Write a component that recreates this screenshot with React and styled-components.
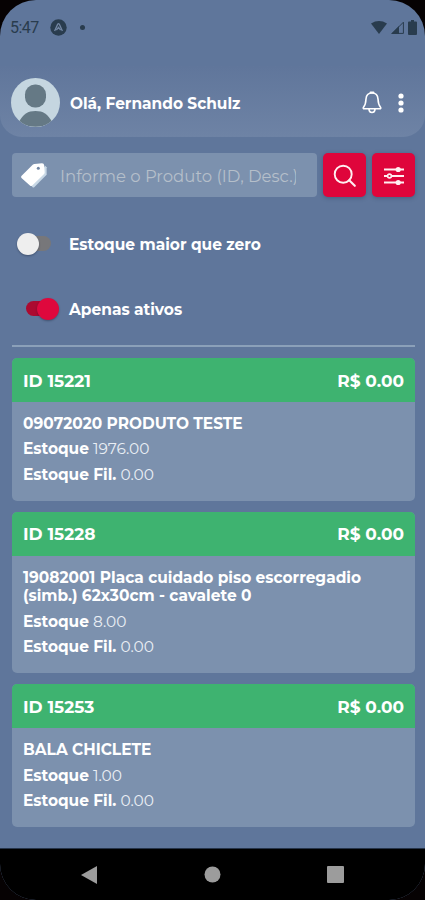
import React, { useState } from "react";
import styled, { createGlobalStyle } from "styled-components";

const GlobalStyle = createGlobalStyle`
  * {
    box-sizing: border-box;
  }

  body {
    margin: 0;
    background-color: #060203;
    font-family: Montserrat, Inter, "Open Sans", sans-serif;
  }
`;

const Screen = styled.div`
  display: flex;
  flex-direction: column;
  width: 425px;
  height: 900px;
  overflow: hidden;
  border-radius: 36px;
  background-color: #5f769b;
  color: #fff;
`;

const StatusBar = styled.div`
  display: flex;
  align-items: center;
  justify-content: space-between;
  height: 66px;
  padding: 0 8px 12px 10px;
  color: #293c4e;
`;

const StatusGroup = styled.div`
  display: flex;
  align-items: center;
  gap: ${(props) => props.$gap}px;
`;

const Clock = styled.span`
  width: 29px;
  font-family: Roboto, sans-serif;
  font-size: 16px;
  letter-spacing: -0.5px;
`;

const Dot = styled.span`
  width: 5px;
  height: 5px;
  margin-left: 2px;
  border-radius: 50%;
  background-color: #293c4e;
`;

const Header = styled.header`
  display: flex;
  align-items: center;
  height: 71px;
  padding: 2px 21px 0 11px;
  border-radius: 0 0 22px 22px;
  background: linear-gradient(#60769b, #6e83a5);
`;

const UserName = styled.h1`
  flex: 1;
  margin: 2px 0 0 10px;
  font-size: 15.4px;
  font-weight: 700;
`;

const HeaderIcons = styled.div`
  display: flex;
  align-items: center;
  gap: 16px;
`;

const Content = styled.main`
  display: flex;
  flex-direction: column;
  flex: 1;
  padding: 16px 10px 0 12px;
`;

const SearchRow = styled.div`
  display: flex;
  gap: 6px;
  height: 44px;
`;

const SearchBox = styled.label`
  display: flex;
  align-items: center;
  flex: 1;
  min-width: 0;
  padding: 0 21px 0 8px;
  border-radius: 4px;
  background-color: #7c91ae;
`;

const SearchInput = styled.input`
  flex: 1;
  min-width: 0;
  margin-left: 12px;
  padding: 1px 0 0;
  border: 0;
  outline: 0;
  background: none;
  color: #fff;
  font-family: inherit;
  font-size: 16.5px;

  &::placeholder {
    color: #b5bfca;
    opacity: 1;
  }
`;

const RedButton = styled.button`
  display: flex;
  align-items: center;
  justify-content: center;
  width: 43px;
  padding: 1px 0 0;
  border: 0;
  border-radius: 5px;
  background-color: #df053b;
  box-shadow: 0 1px 4px rgba(30, 45, 75, 0.35);
`;

const SwitchRow = styled.label`
  display: flex;
  align-items: center;
  height: 65px;
  font-size: 15.45px;
  font-weight: 700;

  &:first-of-type {
    margin-top: 14px;
  }
`;

const SwitchText = styled.span`
  padding-top: 2px;
`;

const Track = styled.button`
  display: flex;
  align-items: center;
  justify-content: ${(props) => (props.$on ? "flex-end" : "flex-start")};
  width: 31px;
  height: 15px;
  margin-left: ${(props) => (props.$on ? 14 : 8)}px;
  margin-right: ${(props) => (props.$on ? 12 : 18)}px;
  padding: 0;
  border: 0;
  border-radius: 8px;
  background-color: ${(props) => (props.$on ? "#ac0a30" : "#77777a")};
`;

const Thumb = styled.span`
  flex: none;
  width: 22px;
  height: 22px;
  margin: ${(props) => (props.$on ? "0 -2px 0 0" : "0 0 0 -3px")};
  border-radius: 50%;
  background-color: ${(props) => (props.$on ? "#df083d" : "#eeeeee")};
  box-shadow: 0 1px 2px rgba(20, 30, 50, 0.4);
`;

const Divider = styled.div`
  height: 2px;
  margin: 4px 0 11px;
  background-color: #8ba0b9;
`;

const Card = styled.article`
  margin-bottom: 11.2px;
  overflow: hidden;
  border-radius: 5px;
  background-color: #7c91ae;
`;

const CardHeader = styled.div`
  display: flex;
  align-items: center;
  justify-content: space-between;
  height: 44px;
  padding: 1px 11px 0;
  background-color: #3eb370;
  font-size: 17px;
  font-weight: 700;
`;

const CardBody = styled.div`
  padding: 13px 11px 13px;
  font-size: 15.4px;
`;

const Description = styled.div`
  margin-bottom: 2.800px;
  line-height: 18.600px;
  font-weight: 700;
  white-space: pre-line;
`;

const StockLine = styled.div`
  height: 25.600px;
  line-height: 25.600px;
  font-weight: 400;
  color: #e9eef4;

  b {
    font-weight: 700;
    color: #fff;
  }
`;

const NavBar = styled.nav`
  display: flex;
  align-items: center;
  justify-content: space-between;
  height: 52px;
  padding: 0 81px 0 80px;
  border-top: 1px solid #26344a;
  background-color: #000;
`;

const products = [
  { id: "15221", description: "09072020 PRODUTO TESTE", stock: "1976.00" },
  {
    id: "15228",
    description:
      "19082001 Placa cuidado piso escorregadio\n(simb.) 62x30cm - cavalete 0",
    stock: "8.00",
  },
  { id: "15253", description: "BALA CHICLETE", stock: "1.00" },
];

const ExpoIcon = () => (
  <svg width="17" height="17" viewBox="0 0 17 17">
    <circle cx="8.5" cy="8.5" r="8.2" fill="#293c4e" />
    <path
      d="M4.6 12 7.6 5.4q.9-1.4 1.8 0L12.4 12M6.4 11.2 8.5 8.3l2.1 2.9"
      fill="none"
      stroke="#7185a2"
      strokeWidth="1.3"
    />
  </svg>
);

const WifiIcon = () => (
  <svg width="16" height="13" viewBox="0 0 16 13">
    <path d="M0 2.5Q8-2.4 16 2.5L8 13Z" fill="#293c4e" />
  </svg>
);

const SignalIcon = () => (
  <svg width="13" height="13" viewBox="0 0 13 13">
    <path d="M0 13 8 5v8Z" fill="#293c4e" />
    <path d="M1.2 12.4 12.4 1.2v11.2Z" fill="none" stroke="#293c4e" />
  </svg>
);

const BatteryIcon = () => (
  <svg width="9" height="15" viewBox="0 0 9 15">
    <path
      d="M3 0h3v1.5h2q1 0 1 1V14q0 1-1 1H1q-1 0-1-1V2.5q0-1 1-1h2Z"
      fill="#293c4e"
    />
  </svg>
);

const Avatar = () => (
  <svg width="49" height="49" viewBox="0 0 49 49">
    <defs>
      <clipPath id="avatar">
        <circle cx="24.5" cy="24.5" r="24.5" />
      </clipPath>
    </defs>
    <g clipPath="url(#avatar)">
      <rect width="49" height="49" fill="#c5d6e0" />
      <rect x="14" y="6.5" width="21" height="23" rx="10" fill="#657985" />
      <path
        d="M8 44C12 36 17 33 24.5 33S37 36 41 44C37 47 31 48.8 24.5 48.8S12 47 8 44Z"
        fill="#657985"
      />
    </g>
  </svg>
);

const BellIcon = () => (
  <svg width="20" height="23" viewBox="0 0 20 23" fill="none" stroke="#fff">
    <path
      d="M10 2C6.6 2 4.2 4.4 4 8c-.2 5-1 6.4-2.5 8.2-.6.8-.2 1.6.7 1.6h15.6c.9 0 1.300-.8.7-1.600C17 14.400 16.200 13 16 8c-.2-3.600-2.600-6-6-6Z"
      strokeWidth="1.6"
      strokeLinejoin="round"
    />
    <path d="M7 18c0 4.6 6 4.6 6 0" strokeWidth="1.6" />
    <path d="M8.5 1.5h3" strokeWidth="1.8" strokeLinecap="round" />
  </svg>
);

const DotsIcon = () => (
  <svg width="6" height="20" viewBox="0 0 6 20" fill="#fff">
    <circle cx="3" cy="3" r="2.6" />
    <circle cx="3" cy="10" r="2.6" />
    <circle cx="3" cy="17" r="2.6" />
  </svg>
);

const TagsIcon = () => (
  <svg width="28" height="26" viewBox="0 0 28 26">
    <path
      d="M25.2 3.8 26.6 5.2v7.6L14.2 25.3q-.8.6-1.6-.1L11.5 24Z"
      fill="#c8d8e6"
    />
    <path
      d="M14.5 1.9 22 1.3q2 0 2.2 2l.5 7q.1 1-.6 1.7L12 23.7q-.9.8-1.8 0L1.5 15.9q-.9-.9-.1-1.9L12.7 2.7q.8-.8 1.8-.8Z"
      fill="#fff"
    />
    <circle cx="18.3" cy="6.2" r="1.5" fill="#7185a2" />
  </svg>
);

const SearchIcon = () => (
  <svg width="24" height="24" viewBox="0 0 24 24" fill="none" stroke="#fff0f2">
    <circle cx="10.2" cy="10.2" r="8.5" strokeWidth="1.9" />
    <path d="m16.2 16.2 5.6 5.6" strokeWidth="2.1" strokeLinecap="round" />
  </svg>
);

const OptionsIcon = () => (
  <svg width="22" height="22" viewBox="0 0 22 22">
    <path d="M1 4.5h20M1 11h20M1 17.5h20" stroke="#fff0f2" strokeWidth="2" />
    <circle cx="15.2" cy="4.5" r="2.6" fill="#fff0f2" />
    <circle
      cx="6.5"
      cy="11"
      r="1.9"
      fill="#df053b"
      stroke="#fff0f2"
      strokeWidth="1.6"
    />
    <circle cx="15.2" cy="17.5" r="2.6" fill="#fff0f2" />
  </svg>
);

const BackIcon = () => (
  <svg width="18" height="20" viewBox="0 0 18 20">
    <path d="M1 10 17 1v18Z" fill="#9c9c9c" />
  </svg>
);

const HomeIcon = () => (
  <svg width="17" height="17" viewBox="0 0 17 17">
    <circle cx="8.5" cy="8.5" r="8" fill="#9c9c9c" />
  </svg>
);

const RecentIcon = () => (
  <svg width="17" height="17" viewBox="0 0 17 17">
    <rect width="17" height="17" rx="1" fill="#9c9c9c" />
  </svg>
);

const Switch = ({ label, on, onToggle }) => (
  <SwitchRow>
    <Track type="button" $on={on} onClick={onToggle}>
      <Thumb $on={on} />
    </Track>
    <SwitchText>{label}</SwitchText>
  </SwitchRow>
);

const ProductCard = ({ product }) => (
  <Card>
    <CardHeader>
      <span>ID {product.id}</span>
      <span>R$ 0.00</span>
    </CardHeader>
    <CardBody>
      <Description>{product.description}</Description>
      <StockLine>
        <b>Estoque</b> {product.stock}
      </StockLine>
      <StockLine>
        <b>Estoque Fil.</b> 0.00
      </StockLine>
    </CardBody>
  </Card>
);

const App = () => {
  const [search, setSearch] = useState("");
  const [onlyInStock, setOnlyInStock] = useState(false);
  const [onlyActive, setOnlyActive] = useState(true);

  return (
    <>
      <GlobalStyle />
      <Screen>
        <StatusBar>
          <StatusGroup $gap={11}>
            <Clock>5:47</Clock>
            <ExpoIcon />
            <Dot />
          </StatusGroup>
          <StatusGroup $gap={4}>
            <WifiIcon />
            <SignalIcon />
            <BatteryIcon />
          </StatusGroup>
        </StatusBar>
        <Header>
          <Avatar />
          <UserName>Olá, Fernando Schulz</UserName>
          <HeaderIcons>
            <BellIcon />
            <DotsIcon />
          </HeaderIcons>
        </Header>
        <Content>
          <SearchRow>
            <SearchBox>
              <TagsIcon />
              <SearchInput
                placeholder="Informe o Produto (ID, Desc.)"
                value={search}
                onChange={(e) => setSearch(e.target.value)}
              />
            </SearchBox>
            <RedButton type="button">
              <SearchIcon />
            </RedButton>
            <RedButton type="button">
              <OptionsIcon />
            </RedButton>
          </SearchRow>
          <Switch
            label="Estoque maior que zero"
            on={onlyInStock}
            onToggle={() => setOnlyInStock(!onlyInStock)}
          />
          <Switch
            label="Apenas ativos"
            on={onlyActive}
            onToggle={() => setOnlyActive(!onlyActive)}
          />
          <Divider />
          {products.map((product) => (
            <ProductCard key={product.id} product={product} />
          ))}
        </Content>
        <NavBar>
          <BackIcon />
          <HomeIcon />
          <RecentIcon />
        </NavBar>
      </Screen>
    </>
  );
};

export default App;
